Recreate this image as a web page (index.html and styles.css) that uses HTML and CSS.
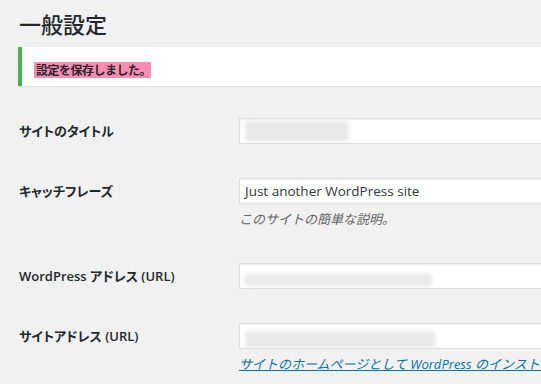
FILE: index.html
```html
<!DOCTYPE html>
<html lang="ja">
<head>
    <meta charset="UTF-8">
    <title>一般設定</title>
    <link rel="stylesheet" href="styles.css">
</head>
<body>
    <div class="wrap">
        <h1 class="page-title">一般設定</h1>

        <div class="notice">
            <p><span class="mark">設定を保存しました。</span></p>
        </div>

        <div class="form-table">
            <div class="row">
                <label class="row-label">サイトのタイトル</label>
                <div class="row-field">
                    <div class="field"><span class="blur blur-title"></span></div>
                </div>
            </div>

            <div class="row">
                <label class="row-label">キャッチフレーズ</label>
                <div class="row-field">
                    <div class="field">Just another WordPress site</div>
                    <p class="description">このサイトの簡単な説明。</p>
                </div>
            </div>

            <div class="row">
                <label class="row-label">WordPress アドレス (URL)</label>
                <div class="row-field">
                    <div class="field"><span class="blur blur-url"></span></div>
                </div>
            </div>

            <div class="row">
                <label class="row-label">サイトアドレス (URL)</label>
                <div class="row-field">
                    <div class="field"><span class="blur blur-home"></span></div>
                    <p class="description"><a href="#">サイトのホームページとして WordPress のインストー</a></p>
                </div>
            </div>
        </div>
    </div>
</body>
</html>
```

FILE: styles.css
```css
/* Estilos generales */
body {
    margin: 0;
    background: #f1f1f1;
    color: #23282d;
    font-family: 'Open Sans', 'Noto Sans CJK JP', sans-serif;
    overflow: hidden;
}

.wrap {
    padding-left: 18px;
}

.page-title {
    font-family: 'Noto Sans CJK JP', sans-serif;
    font-size: 22px;
    font-weight: 500;
    line-height: 30px;
    margin: 8px 0 0 1px;
    color: #23282d;
}

/* Aviso */
.notice {
    margin-top: 9px;
    background: #fff;
    border-left: 4px solid #46b450;
    box-shadow: 0 1px 1px rgba(0, 0, 0, 0.06);
    height: 39px;
    box-sizing: border-box;
    padding: 15px 12px 0;
}

.notice p {
    margin: 0;
}

.mark {
    display: block;
    width: fit-content;
    background: #ff8db0;
    font-family: 'Noto Sans CJK JP', sans-serif;
    font-size: 12px;
    font-weight: 700;
    line-height: 16px;
    height: 16px;
    padding-left: 2px;
    letter-spacing: -0.5px;
    color: #23282d;
}

/* Tabla */
.form-table {
    margin-top: 15px;
}

.row {
    display: grid;
    grid-template-columns: 221px 302px;
    padding: 17px 0;
}

.row-label {
    font-size: 13px;
    font-weight: 600;
    line-height: 26px;
    padding-left: 1px;
    font-feature-settings: "palt";
}

.row-field {
    min-width: 0;
}

.field {
    height: 26px;
    width: 320px;
    box-sizing: border-box;
    border: 1px solid #ddd;
    background: #fff;
    box-shadow: inset 0 1px 2px rgba(0, 0, 0, 0.07);
    padding: 0 5px;
    font-size: 13.5px;
    line-height: 24px;
    color: #32373c;
    display: flex;
    align-items: center;
}

.blur {
    display: block;
    background: #e9e9e9;
    filter: blur(2px);
}

.blur-title {
    width: 104px;
    height: 20px;
}

.blur-url {
    width: 187px;
    height: 12px;
    margin-top: 8px;
}

.blur-home {
    width: 190px;
    height: 17px;
    margin-top: 6px;
}

.description {
    margin: 5px 0 0;
    font-size: 13px;
    line-height: 20px;
    font-style: italic;
    color: #666;
    white-space: nowrap;
    overflow: hidden;
}

.description a {
    color: #0073aa;
}
```
